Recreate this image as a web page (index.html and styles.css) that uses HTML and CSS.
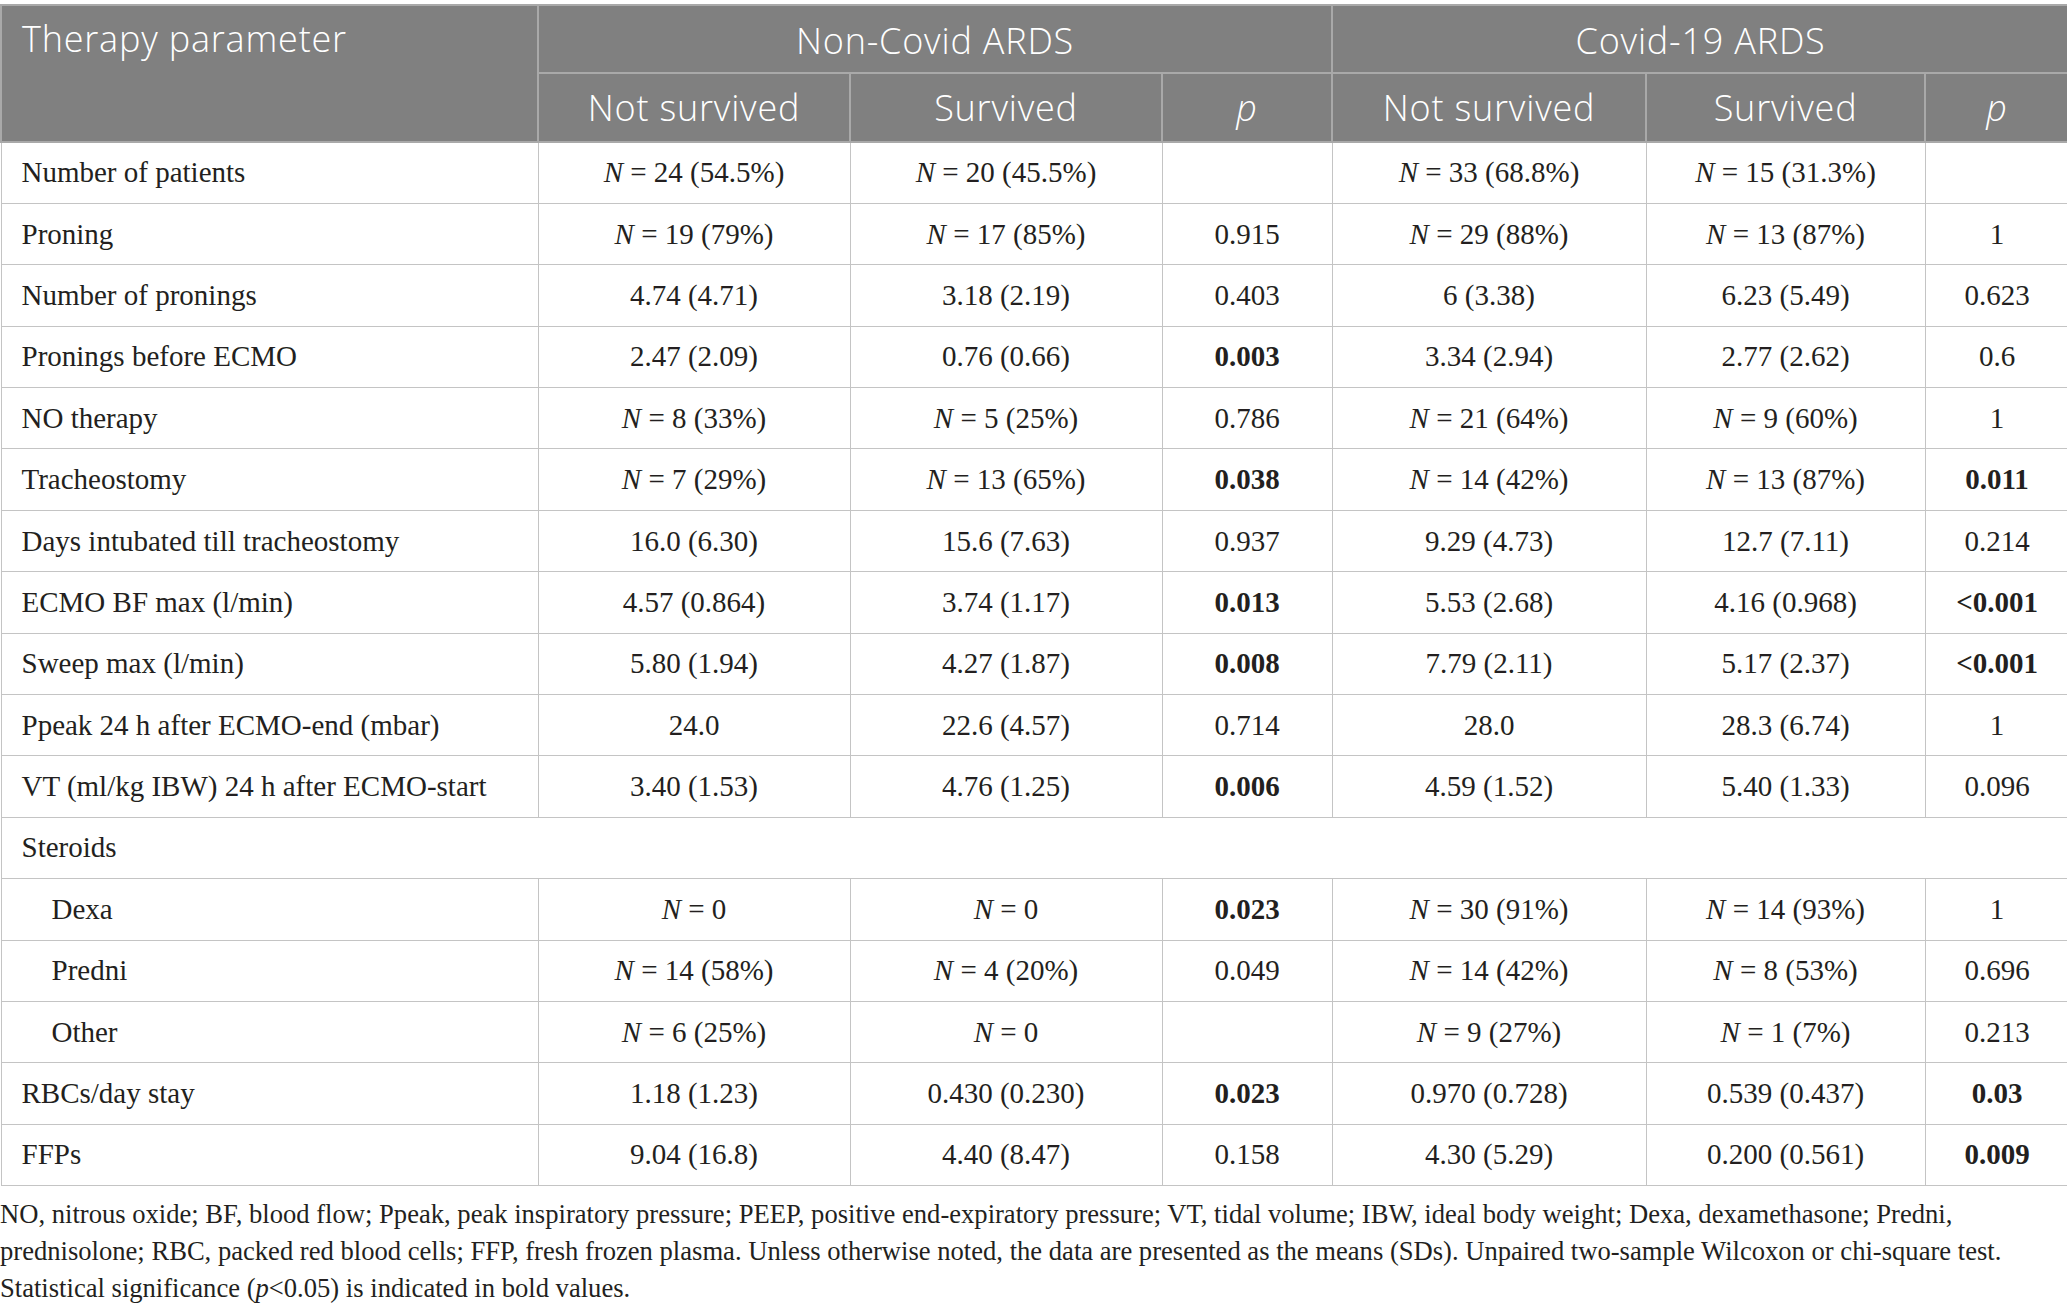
FILE: index.html
```html
<!DOCTYPE html>
<html lang="en">
<head>
<meta charset="utf-8">
<title>Therapy parameters</title>
<link rel="stylesheet" href="styles.css">
</head>
<body>
<table class="data">
  <colgroup>
    <col class="c-param">
    <col class="c-val">
    <col class="c-val">
    <col class="c-p">
    <col class="c-val2">
    <col class="c-val3">
    <col class="c-p2">
  </colgroup>
  <thead>
    <tr class="h1">
      <th rowspan="2" class="param">Therapy parameter</th>
      <th colspan="3">Non-Covid ARDS</th>
      <th colspan="3">Covid-19 ARDS</th>
    </tr>
    <tr class="h2">
      <th>Not survived</th>
      <th>Survived</th>
      <th><i>p</i></th>
      <th>Not survived</th>
      <th>Survived</th>
      <th><i>p</i></th>
    </tr>
  </thead>
  <tbody>
    <tr><td>Number of patients</td><td><i>N</i> = 24 (54.5%)</td><td><i>N</i> = 20 (45.5%)</td><td></td><td><i>N</i> = 33 (68.8%)</td><td><i>N</i> = 15 (31.3%)</td><td></td></tr>
    <tr><td>Proning</td><td><i>N</i> = 19 (79%)</td><td><i>N</i> = 17 (85%)</td><td>0.915</td><td><i>N</i> = 29 (88%)</td><td><i>N</i> = 13 (87%)</td><td>1</td></tr>
    <tr><td>Number of pronings</td><td>4.74 (4.71)</td><td>3.18 (2.19)</td><td>0.403</td><td>6 (3.38)</td><td>6.23 (5.49)</td><td>0.623</td></tr>
    <tr><td>Pronings before ECMO</td><td>2.47 (2.09)</td><td>0.76 (0.66)</td><td><b>0.003</b></td><td>3.34 (2.94)</td><td>2.77 (2.62)</td><td>0.6</td></tr>
    <tr><td>NO therapy</td><td><i>N</i> = 8 (33%)</td><td><i>N</i> = 5 (25%)</td><td>0.786</td><td><i>N</i> = 21 (64%)</td><td><i>N</i> = 9 (60%)</td><td>1</td></tr>
    <tr><td>Tracheostomy</td><td><i>N</i> = 7 (29%)</td><td><i>N</i> = 13 (65%)</td><td><b>0.038</b></td><td><i>N</i> = 14 (42%)</td><td><i>N</i> = 13 (87%)</td><td><b>0.011</b></td></tr>
    <tr><td>Days intubated till tracheostomy</td><td>16.0 (6.30)</td><td>15.6 (7.63)</td><td>0.937</td><td>9.29 (4.73)</td><td>12.7 (7.11)</td><td>0.214</td></tr>
    <tr><td>ECMO BF max (l/min)</td><td>4.57 (0.864)</td><td>3.74 (1.17)</td><td><b>0.013</b></td><td>5.53 (2.68)</td><td>4.16 (0.968)</td><td><b>&lt;0.001</b></td></tr>
    <tr><td>Sweep max (l/min)</td><td>5.80 (1.94)</td><td>4.27 (1.87)</td><td><b>0.008</b></td><td>7.79 (2.11)</td><td>5.17 (2.37)</td><td><b>&lt;0.001</b></td></tr>
    <tr><td>Ppeak 24 h after ECMO-end (mbar)</td><td>24.0</td><td>22.6 (4.57)</td><td>0.714</td><td>28.0</td><td>28.3 (6.74)</td><td>1</td></tr>
    <tr><td>VT (ml/kg IBW) 24 h after ECMO-start</td><td>3.40 (1.53)</td><td>4.76 (1.25)</td><td><b>0.006</b></td><td>4.59 (1.52)</td><td>5.40 (1.33)</td><td>0.096</td></tr>
    <tr><td colspan="7">Steroids</td></tr>
    <tr><td class="sub">Dexa</td><td><i>N</i> = 0</td><td><i>N</i> = 0</td><td><b>0.023</b></td><td><i>N</i> = 30 (91%)</td><td><i>N</i> = 14 (93%)</td><td>1</td></tr>
    <tr><td class="sub">Predni</td><td><i>N</i> = 14 (58%)</td><td><i>N</i> = 4 (20%)</td><td>0.049</td><td><i>N</i> = 14 (42%)</td><td><i>N</i> = 8 (53%)</td><td>0.696</td></tr>
    <tr><td class="sub">Other</td><td><i>N</i> = 6 (25%)</td><td><i>N</i> = 0</td><td></td><td><i>N</i> = 9 (27%)</td><td><i>N</i> = 1 (7%)</td><td>0.213</td></tr>
    <tr><td>RBCs/day stay</td><td>1.18 (1.23)</td><td>0.430 (0.230)</td><td><b>0.023</b></td><td>0.970 (0.728)</td><td>0.539 (0.437)</td><td><b>0.03</b></td></tr>
    <tr><td>FFPs</td><td>9.04 (16.8)</td><td>4.40 (8.47)</td><td>0.158</td><td>4.30 (5.29)</td><td>0.200 (0.561)</td><td><b>0.009</b></td></tr>
  </tbody>
</table>
<p class="note">NO, nitrous oxide; BF, blood flow; Ppeak, peak inspiratory pressure; PEEP, positive end-expiratory pressure; VT, tidal volume; IBW, ideal body weight; Dexa, dexamethasone; Predni,<br>prednisolone; RBC, packed red blood cells; FFP, fresh frozen plasma. Unless otherwise noted, the data are presented as the means (SDs). Unpaired two-sample Wilcoxon or chi-square test.<br>Statistical significance (<i>p</i>&lt;0.05) is indicated in bold values.</p>
</body>
</html>
```

FILE: styles.css
```css
html, body {
  margin: 0;
  padding: 0;
  background: #ffffff;
}

body {
  padding-top: 4px;
  color: #231f20;
  font-family: "Liberation Serif", "Times New Roman", serif;
}

.data {
  width: 2068px;
  border-collapse: collapse;
  table-layout: fixed;
  font-size: 29px;
}

.c-param { width: 537px; }
.c-val { width: 312px; }
.c-p { width: 170px; }
.c-val2 { width: 314px; }
.c-val3 { width: 279px; }
.c-p2 { width: 144px; }

.data thead th {
  background: #808080;
  color: #ffffff;
  font-family: "Open Sans", "Noto Sans", sans-serif;
  font-weight: 300;
  font-size: 36px;
  letter-spacing: 0.8px;
  text-align: center;
  border: 2px solid #a9a9a9;
  padding: 0;
  line-height: 1;
}

.data thead tr.h1 { height: 68px; }
.data thead tr.h2 { height: 69px; }

.data thead tr.h1 th {
  padding-top: 3px;
}

.data thead tr.h1 th.param {
  text-align: left;
  vertical-align: top;
  padding: 15px 0 0 20px;
}

.data thead th i {
  font-style: italic;
}

.data tbody td {
  border: 1.5px solid #c4c4c4;
  text-align: center;
  padding: 0;
  height: 61.4px;
  box-sizing: border-box;
}

.data tbody tr { height: 61.4px; }

.data tbody td:first-child {
  text-align: left;
  padding-left: 20px;
}

.data tbody td.sub {
  padding-left: 50px;
}

.data tbody td b {
  font-weight: 700;
}

.note {
  margin: 10px 0 0 0;
  font-size: 26.6px;
  line-height: 37px;
  color: #231f20;
}
```
